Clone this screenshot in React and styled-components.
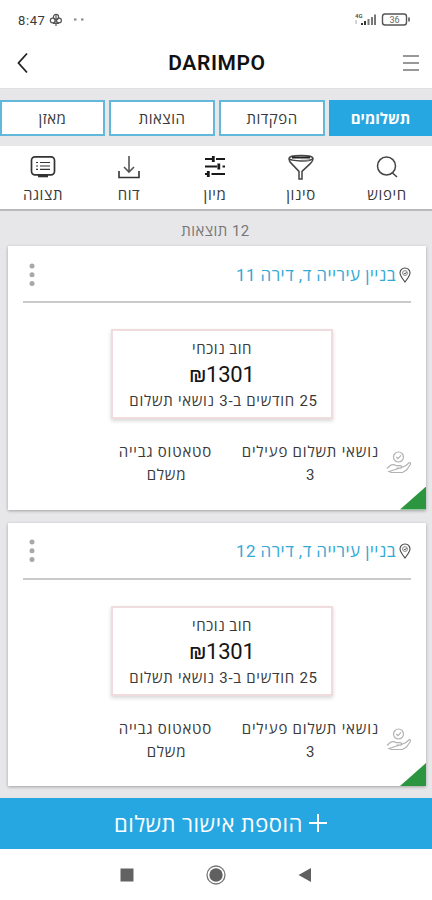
import React from 'react';
import styled, { createGlobalStyle } from 'styled-components';

const colors = {
	blue: '#27a7e1',
	link: '#35a9d6',
	page: '#e7e7e9',
	green: '#2b963f',
	font: '#3a3a3a'
};

const GlobalStyle = createGlobalStyle`
	* {
		box-sizing: border-box;
	}

	body {
		margin: 0;
		background: #fff;
		font-family: Roboto, 'Open Sans', 'DejaVu Sans', sans-serif;
		color: ${colors.font};
	}

	svg {
		display: block;
		flex: none;
	}
`;

const Screen = styled.div`
	width: 432px;
	height: 900px;
	display: flex;
	flex-direction: column;
	overflow: hidden;
	background: ${colors.page};
`;

const StatusBar = styled.div`
	height: 38px;
	display: flex;
	align-items: center;
	padding: 2px 21px 0 18px;
	background: #fff;
`;

const Clock = styled.span`
	font-size: 13px;
	letter-spacing: 0.6px;
	margin-right: 4px;
`;

const StatusSpacer = styled.div`
	flex: 1;
`;

const Header = styled.header`
	height: 51px;
	display: flex;
	align-items: center;
	justify-content: space-between;
	padding: 0 13px 0 17px;
	background: #fff;
	border-bottom: 1px solid #e0e0e0;
`;

const Title = styled.h1`
	margin: 0;
	padding-left: 2px;
	font-size: 21px;
	line-height: 24px;
	font-weight: 600;
	letter-spacing: 0.6px;
	color: #111;
`;

const Tabs = styled.nav`
	direction: rtl;
	display: grid;
	grid-template-columns: 103px 106px 106px 105px;
	gap: 4px;
	padding: 11px 0 10px;
`;

const Tab = styled.button`
	height: 36px;
	padding: 0;
	border: 2px solid ${props => props.$active ? colors.blue : '#62b8da'};
	background: ${props => props.$active ? colors.blue : '#fff'};
	color: ${props => props.$active ? '#fff' : colors.font};
	font-family: inherit;
	font-size: 15px;
	font-weight: ${props => props.$active ? 700 : 400};
	letter-spacing: ${props => props.$active ? 0 : 0.5}px;
`;

const Toolbar = styled.div`
	direction: rtl;
	height: 65px;
	display: grid;
	grid-template-columns: repeat(5, 1fr);
	padding-right: 2px;
	background: #fff;
	border-bottom: 2px solid #b9b9bb;
`;

const Tool = styled.div`
	display: flex;
	flex-direction: column;
	align-items: center;
	padding-top: 7px;
	font-size: 15px;
	line-height: 20px;
	letter-spacing: 0.6px;
	gap: 4px;
`;

const ResultCount = styled.div`
	direction: rtl;
	height: 35px;
	line-height: 40px;
	padding-right: 1px;
	text-align: center;
	font-size: 15px;
	letter-spacing: 0.45px;
	color: #77777a;
`;

const CardList = styled.main`
	flex: 1;
	display: flex;
	flex-direction: column;
	gap: 13px;
	padding: 0 6px 0 8px;
`;

const Card = styled.article`
	direction: rtl;
	position: relative;
	height: 263.5px;
	flex: none;
	padding: 0 15px;
	background: #fff;
	box-shadow: 0 1px 3px rgba(0, 0, 0, 0.3);
`;

const CardHeader = styled.div`
	height: 57px;
	display: flex;
	align-items: center;
	padding-top: 2px;
	border-bottom: 2px solid #cacaca;
`;

const Address = styled.a`
	flex: 1;
	margin-right: 3px;
	font-size: 17px;
	line-height: 24px;
	letter-spacing: 0.45px;
	color: ${colors.link};
`;

const DebtBox = styled.div`
	width: 222px;
	height: 90px;
	margin: 26px 78px 0 0;
	padding-top: 7px;
	border: 2px solid #f0dcdf;
	box-shadow: 0 2px 4px rgba(0, 0, 0, 0.16);
	text-align: center;
	font-size: 15px;
	line-height: 22px;
	letter-spacing: 0.5px;
	white-space: nowrap;
`;

const Amount = styled.div`
	font-size: 22px;
	line-height: 30px;
	letter-spacing: -0.2px;
	color: #151515;
`;

const DebtPeriod = styled.div`
	padding-left: 3px;
	letter-spacing: 0.72px;
`;

const Details = styled.div`
	display: flex;
	align-items: flex-start;
	padding-top: 22px;
	font-size: 15px;
	line-height: 23px;
	letter-spacing: 0.8px;
	text-align: center;
`;

const PaymentIcon = styled.div`
	padding-top: 10px;
	width: 32px;
`;

const Detail = styled.div`
	width: ${props => props.$width}px;
	margin-left: 30px;
	white-space: nowrap;
`;

const Corner = styled.div`
	position: absolute;
	right: 0;
	bottom: 0;
	width: 26px;
	height: 23px;
	background: ${colors.green};
	clip-path: polygon(100% 0, 100% 100%, 0 100%);
`;

const AddButton = styled.button`
	direction: rtl;
	height: 51px;
	flex: none;
	display: flex;
	align-items: center;
	justify-content: center;
	gap: 6px;
	padding: 0 0 2px 9px;
	border: 0;
	background: ${colors.blue};
	color: #fff;
	font-family: inherit;
	font-size: 22px;
	letter-spacing: 0.5px;
`;

const SystemNav = styled.div`
	height: 51px;
	flex: none;
	display: flex;
	align-items: center;
	justify-content: space-between;
	padding: 0 120px;
	background: #fff;
`;

const SearchIcon = () => (
	<svg width="28" height="28" viewBox="0 0 28 28" fill="none" stroke="#444" strokeWidth="1.5">
		<circle cx="13.5" cy="13" r="9" />
		<path d="M19.5 20l4.5 4" />
	</svg>
);

const FilterIcon = () => (
	<svg width="28" height="28" viewBox="0 0 28 28" fill="none" stroke="#444" strokeWidth="1.5">
		<ellipse cx="14" cy="5.2" rx="12" ry="2.7" />
		<path d="M5 4.5h18" stroke="#222" strokeWidth="2" />
		<path d="M14 7.500h8" stroke="#777" />
		<path d="M2 6c.2 2 .8 3 2.3 4.4l7.700 8v7.600h3v-7.600l8.500-8C25.500 8.500 26 7.500 26 5.5" />
	</svg>
);

const SortIcon = () => (
	<svg width="28" height="28" viewBox="0 0 28 28" fill="none" stroke="#191919" strokeWidth="2">
		<path d="M4 6h7M15 6h9M4 13.500h12M21.500 13.500H24M4 21h3M10.500 21H24" />
		<path d="M12.300 3v6M17.800 10.500v6M7.300 18v6" strokeWidth="2.800" />
	</svg>
);

const ReportIcon = () => (
	<svg width="28" height="28" viewBox="0 0 28 28" fill="none" stroke="#333" strokeWidth="1.6">
		<path d="M14 3v16M9 14l5 5 5-5" stroke="#555" />
		<path d="M4 18v6.500h20V18" />
	</svg>
);

const DisplayIcon = () => (
	<svg width="28" height="28" viewBox="0 0 28 28" fill="none" stroke="#333" strokeWidth="1.7">
		<rect x="2.5" y="3.8" width="23" height="18" rx="3.5" />
		<path d="M7 9.5h2M11 9.5h10M7 13h2M11 13h10M7 16.3h2M11 16.3h10" strokeWidth="1.2" />
		<path d="M9 23h10" strokeWidth="2.6" />
	</svg>
);

const PinIcon = () => (
	<svg width="12" height="16" viewBox="0 0 12 16" fill="none" stroke="#444" strokeWidth="1.1">
		<path d="M6 15C3.5 11.5 1 8.700 1 6a5 5 0 0 1 10 0c0 2.700-2.500 5.500-5 9z" />
		<circle cx="6" cy="6" r="2.4" stroke="#777" strokeWidth=".9" />
		<path d="M5 6l1 1 1.500-2" strokeWidth=".8" />
	</svg>
);

const MenuDots = () => (
	<svg width="17" height="26" viewBox="0 0 17 26" fill="#a8a8a8">
		<circle cx="9" cy="4" r="2.5" />
		<circle cx="9" cy="12.700" r="2.5" />
		<circle cx="9" cy="21.400" r="2.5" />
	</svg>
);

const HandIcon = () => (
	<svg width="25" height="24" viewBox="0 0 25 24" fill="none" stroke="#b2b2b2" strokeWidth="1.2">
		<circle cx="12.500" cy="6" r="5" />
		<path d="M10.300 6l1.700 1.700 3-3.300" />
		<path d="M1 17.500l3.500-3.200c2-1.300 4-.8 6 .4h3.500c2.200 0 2.200 2.500 0 2.500h-3.500M15.500 16.500l4.500-2 3-2.800c1.500-.6 2 .8 1 2.300l-3.500 5-4 2.500H5.500L3 20.500z" />
	</svg>
);

const StatusIcons = () => (
	<svg width="57" height="16" viewBox="0 0 57 16" fill="none">
		<text x="1" y="6" fontSize="6" fontWeight="700" fill="#555">4G</text>
		<path d="M2 8v4" stroke="#aaa" />
		<path d="M8 13v-2M11 13V9" stroke="#333" strokeWidth="2" />
		<path d="M14.500 13V7M18 13V5M21 13V2.500" stroke="#777" strokeWidth="2" />
		<rect x="28.500" y="2" width="24" height="11" rx="2.500" stroke="#555" strokeWidth="1.4" />
		<path d="M55 5.500v4" stroke="#777" strokeWidth="2" />
		<text x="40.500" y="11" textAnchor="middle" fontSize="9" fill="#666">36</text>
	</svg>
);

const tools = [
	{ label: 'חיפוש', Icon: SearchIcon },
	{ label: 'סינון', Icon: FilterIcon },
	{ label: 'מיון', Icon: SortIcon },
	{ label: 'דוח', Icon: ReportIcon },
	{ label: 'תצוגה', Icon: DisplayIcon }
];

const PaymentCard = ({ address }) => (
	<Card>
		<CardHeader>
			<PinIcon />
			<Address>{ address }</Address>
			<MenuDots />
		</CardHeader>
		<DebtBox>
			<div>חוב נוכחי</div>
			<Amount>₪1301</Amount>
			<DebtPeriod>25 חודשים ב-3 נושאי תשלום</DebtPeriod>
		</DebtBox>
		<Details>
			<PaymentIcon><HandIcon /></PaymentIcon>
			<Detail $width={137}>
				<div>נושאי תשלום פעילים</div>
				<div>3</div>
			</Detail>
			<Detail $width={91}>
				<div>סטאטוס גבייה</div>
				<div>משלם</div>
			</Detail>
		</Details>
		<Corner />
	</Card>
);

const App = () => (
	<Screen>
		<GlobalStyle />
		<StatusBar>
			<Clock>8:47</Clock>
			<svg width="36" height="14" viewBox="0 0 36 14" fill="none" stroke="#555" strokeWidth="1.2">
				<circle cx="7" cy="4" r="2.600" />
				<circle cx="3.700" cy="7.500" r="2.400" />
				<circle cx="10" cy="7.500" r="2.400" />
				<path d="M7 2v11M4 10.500h6" />
				<path d="M25 6.500h2.500M32 6.500h2.500" stroke="#888" strokeWidth="2" />
			</svg>
			<StatusSpacer />
			<StatusIcons />
		</StatusBar>
		<Header>
			<svg width="12" height="22" viewBox="0 0 12 22" fill="none" stroke="#222" strokeWidth="1.800">
				<path d="M10 1.500L1.500 11 10 20.500" />
			</svg>
			<Title>DARIMPO</Title>
			<svg width="16" height="18" viewBox="0 0 16 18" stroke="#777" strokeWidth="1.700">
				<path d="M0 2h16M0 9h16M0 16h16" />
			</svg>
		</Header>
		<Tabs>
			<Tab $active>תשלומים</Tab>
			<Tab>הפקדות</Tab>
			<Tab>הוצאות</Tab>
			<Tab>מאזן</Tab>
		</Tabs>
		<Toolbar>
			{ tools.map(({ label, Icon }) => (
				<Tool key={label}>
					<Icon />
					<span>{ label }</span>
				</Tool>
			)) }
		</Toolbar>
		<ResultCount>12 תוצאות</ResultCount>
		<CardList>
			<PaymentCard address="בניין עירייה ד, דירה 11" />
			<PaymentCard address="בניין עירייה ד, דירה 12" />
		</CardList>
		<AddButton>
			<svg width="18" height="18" viewBox="0 0 18 18" stroke="#fff" strokeWidth="2">
				<path d="M9 0v18M0 9h18" />
			</svg>
			<span>הוספת אישור תשלום</span>
		</AddButton>
		<SystemNav>
			<svg width="14" height="14" viewBox="0 0 14 14" fill="#626262">
				<path d="M.5.5h13v13H.5z" />
			</svg>
			<svg width="20" height="20" viewBox="0 0 20 20" fill="#606060">
				<circle cx="10" cy="10" r="9" fill="none" stroke="#777" strokeWidth="1.300" />
				<circle cx="10" cy="10" r="6.700" />
			</svg>
			<svg width="14" height="14" viewBox="0 0 14 14" fill="#606060">
				<path d="M13 0v14L.5 7z" />
			</svg>
		</SystemNav>
	</Screen>
);

export default App;
